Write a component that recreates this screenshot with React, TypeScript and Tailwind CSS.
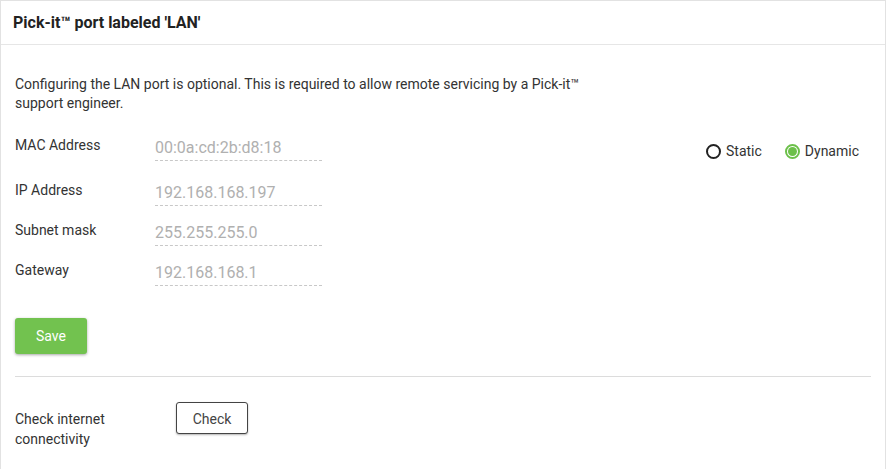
import React, { useState } from 'react';

const fields = [
    { label: 'MAC Address', value: '00:0a:cd:2b:d8:18' },
    { label: 'IP Address', value: '192.168.168.197' },
    { label: 'Subnet mask', value: '255.255.255.0' },
    { label: 'Gateway', value: '192.168.168.1' },
];

const Radio = ({ checked, label, onClick }: { checked: boolean; label: string; onClick: () => void }) => (
    <button onClick={onClick} className="flex items-center gap-[5px] text-[14px] text-[#333] cursor-pointer">
        {checked ? (
            <span className="w-[15px] h-[15px] rounded-full border-2 border-[#6cc04a] flex items-center justify-center">
                <span className="w-[9px] h-[9px] rounded-full bg-[#6cc04a]" />
            </span>
        ) : (
            <span className="w-[15px] h-[15px] rounded-full border-2 border-[#222]" />
        )}
        {label}
    </button>
);

export default function App() {
    const [mode, setMode] = useState<'static' | 'dynamic'>('dynamic');

    return (
        <div className="w-[886px] h-[469px] bg-white font-['Roboto',sans-serif] overflow-hidden">
            <div className="h-full border border-b-0 border-[#e2e2e2]">
                {/* Header */}
                <div className="h-[44px] border-b border-[#e6e6e6] flex items-center px-[12px]">
                    <h2 className="text-[16px] font-bold text-[#222]">Pick-it™ port labeled 'LAN'</h2>
                </div>

                <div className="px-[14px] pt-[30px]">
                    <p className="text-[14px] leading-[19px] text-[#333] w-[590px]">
                        Configuring the LAN port is optional. This is required to allow remote servicing by a Pick-it™ support engineer.
                    </p>

                    {/* Form */}
                    <div className="flex mt-[23px]">
                        <div className="flex flex-col">
                            {fields.map((f, i) => (
                                <div key={f.label} className={`flex ${i === 0 ? 'h-[45px]' : 'h-[40px]'}`}>
                                    <div className="w-[140px] text-[14px] text-[#333] leading-[19px]">{f.label}</div>
                                    <div className="w-[167px] h-[25px] border-b border-dashed border-[#c8c8c8] text-[16px] text-[#b0b0b0] leading-[19px] pt-[2px]">
                                        {f.value}
                                    </div>
                                </div>
                            ))}
                        </div>
                        <div className="ml-auto mr-[12px] flex gap-[23px] h-[19px] mt-[6px]">
                            <Radio checked={mode === 'static'} label="Static" onClick={() => setMode('static')} />
                            <Radio checked={mode === 'dynamic'} label="Dynamic" onClick={() => setMode('dynamic')} />
                        </div>
                    </div>

                    <button className="mt-[17px] w-[72px] h-[36px] rounded-[3px] bg-[#72c24f] text-white text-[14px] shadow-[0_1px_3px_rgba(0,0,0,0.35)]">
                        Save
                    </button>

                    <div className="mt-[22px] border-t border-[#dcdcdc]" />

                    <div className="flex items-start mt-[25px]">
                        <div className="w-[161px] text-[14px] leading-[20px] text-[#333] mt-[7px]">
                            Check internet<br />connectivity
                        </div>
                        <button className="w-[72px] h-[32px] pt-[3px] rounded-[3px] border border-[#444] bg-white text-[14px] text-[#444] shadow-[0_1px_2px_rgba(0,0,0,0.3)]">
                            Check
                        </button>
                    </div>
                </div>
            </div>
        </div>
    );
}
